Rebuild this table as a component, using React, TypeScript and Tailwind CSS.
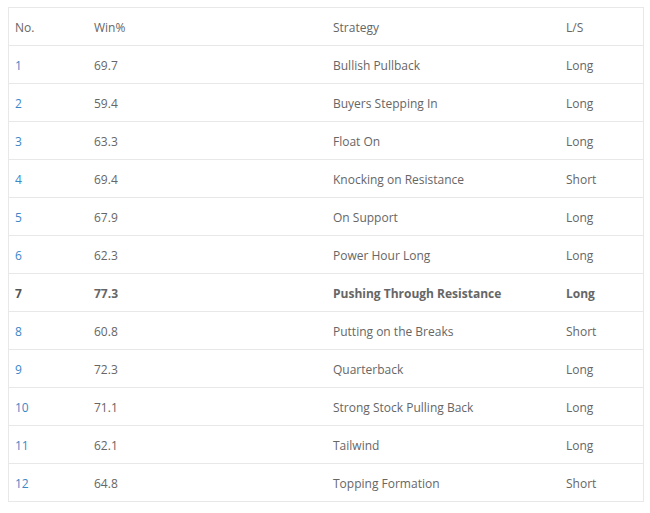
const rows = [
  { no: '1', win: '69.7', strategy: 'Bullish Pullback', ls: 'Long' },
  { no: '2', win: '59.4', strategy: 'Buyers Stepping In', ls: 'Long' },
  { no: '3', win: '63.3', strategy: 'Float On', ls: 'Long' },
  { no: '4', win: '69.4', strategy: 'Knocking on Resistance', ls: 'Short' },
  { no: '5', win: '67.9', strategy: 'On Support', ls: 'Long' },
  { no: '6', win: '62.3', strategy: 'Power Hour Long', ls: 'Long' },
  { no: '7', win: '77.3', strategy: 'Pushing Through Resistance', ls: 'Long', bold: true },
  { no: '8', win: '60.8', strategy: 'Putting on the Breaks', ls: 'Short' },
  { no: '9', win: '72.3', strategy: 'Quarterback', ls: 'Long' },
  { no: '10', win: '71.1', strategy: 'Strong Stock Pulling Back', ls: 'Long' },
  { no: '11', win: '62.1', strategy: 'Tailwind', ls: 'Long' },
  { no: '12', win: '64.8', strategy: 'Topping Formation', ls: 'Short' },
];

const cols = 'grid grid-cols-[79px_239px_233px_83px] items-center pt-[2px]';

export default function App() {
  return (
    <div className="bg-white min-h-[513px] pt-[7px] pl-2 font-['Open_Sans',sans-serif] text-[12px] text-[#666]">
      <div className="w-[636px] border border-[#e8e8e8]">
        <div className={`${cols} h-[37px]`}>
          <div className="pl-[6px]">No.</div>
          <div className="pl-[6px]">Win%</div>
          <div className="pl-[6px]">Strategy</div>
          <div className="pl-[6px]">L/S</div>
        </div>
        {rows.map((r) => (
          <div
            key={r.no}
            className={`${cols} h-[38px] border-t border-[#e8e8e8] ${r.bold ? 'font-bold' : ''}`}
          >
            <div className={`pl-[6px] ${r.bold ? 'text-[#555]' : 'text-[#3b87c8]'}`}>{r.no}</div>
            <div className="pl-[6px]">{r.win}</div>
            <div className="pl-[6px]">{r.strategy}</div>
            <div className="pl-[6px]">{r.ls}</div>
          </div>
        ))}
      </div>
    </div>
  );
}
